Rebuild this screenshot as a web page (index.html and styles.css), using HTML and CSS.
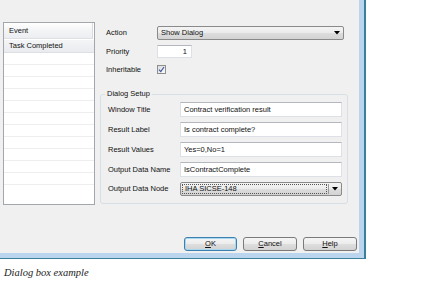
FILE: index.html
```html
<!DOCTYPE html>
<html>
<head>
<meta charset="utf-8">
<link rel="stylesheet" href="styles.css">
</head>
<body>
<div class="frame">
  <div class="window">
    <div class="main">
      <div class="list">
        <div class="list-head">Event</div>
        <div class="list-row selected">Task Completed</div>
        <div class="list-row"></div>
        <div class="list-row"></div>
        <div class="list-row"></div>
        <div class="list-row"></div>
        <div class="list-row"></div>
        <div class="list-row"></div>
        <div class="list-row"></div>
        <div class="list-row"></div>
        <div class="list-row"></div>
        <div class="list-row"></div>
        <div class="list-row"></div>
      </div>
      <div class="panel">
        <div class="top">
          <div class="row row-action">
            <span class="lbl">Action</span>
            <div class="combo combo-action">
              <span class="combo-text">Show Dialog</span>
              <svg class="arrow" width="6" height="4" viewBox="0 0 6 4"><path d="M0 0H6L3 3.5Z" fill="#000"/></svg>
            </div>
          </div>
          <div class="row row-priority">
            <span class="lbl">Priority</span>
            <div class="field field-num">1</div>
          </div>
          <div class="row row-check">
            <span class="lbl">Inheritable</span>
            <span class="check">
              <svg width="7" height="7" viewBox="0 0 7 7"><path d="M1 3.6L2.8 5.6L6 1" fill="none" stroke="#3d57a0" stroke-width="1.2"/></svg>
            </span>
          </div>
        </div>
        <div class="group">
          <div class="legend">Dialog Setup</div>
          <div class="grow">
            <span class="glbl">Window Title</span>
            <div class="field">Contract verification result</div>
          </div>
          <div class="grow">
            <span class="glbl">Result Label</span>
            <div class="field">Is contract complete?</div>
          </div>
          <div class="grow">
            <span class="glbl">Result Values</span>
            <div class="field">Yes=0,No=1</div>
          </div>
          <div class="grow">
            <span class="glbl">Output Data Name</span>
            <div class="field">IsContractComplete</div>
          </div>
          <div class="grow grow-last">
            <span class="glbl">Output Data Node</span>
            <div class="combo combo-node">
              <span class="focus">IHA SICSE-148</span>
              <span class="sep"></span>
              <svg class="arrow" width="6" height="4" viewBox="0 0 6 4"><path d="M0 0H6L3 3.5Z" fill="#000"/></svg>
            </div>
          </div>
        </div>
      </div>
    </div>
    <div class="buttons">
      <div class="btn btn-default"><span class="u">O</span>K</div>
      <div class="btn"><span class="u">C</span>ancel</div>
      <div class="btn"><span class="u">H</span>elp</div>
    </div>
  </div>
</div>
<p class="caption">Dialog box example</p>
</body>
</html>
```

FILE: styles.css
```css
html, body {
  margin: 0;
  padding: 0;
  background: #ffffff;
}

.frame {
  width: 364px;
  border-right: 2px solid #3a7f9c;
  border-bottom: 1px solid #3a7f9c;
}

.window {
  width: 359px;
  height: 253px;
  background: #f0f0f0;
  border-right: 5px solid #bcd5ee;
  border-bottom: 5px solid #bcd5ee;
  padding: 22px 0 0 3px;
  box-sizing: content-box;
  font-family: "Liberation Sans", Arial, sans-serif;
  font-size: 7.5px;
  line-height: 1;
  color: #111;
}

.window {
  width: 356px;
  height: 231px;
}

.main {
  display: flex;
  height: 183px;
}

.list {
  width: 92px;
  height: 183px;
  box-sizing: border-box;
  border: 1px solid #a3a6ab;
  background: #ffffff;
  overflow: hidden;
}

.list-head {
  height: 16px;
  box-sizing: border-box;
  display: flex;
  align-items: center;
  padding-left: 5px;
  background: linear-gradient(#ffffff, #f3f4f6 50%, #eceef1);
  border-bottom: 1px solid #dde0e4;
  border-right: 1px solid #d8dbe0;
  margin-right: 1px;
}

.list-row {
  height: 12px;
  box-sizing: border-box;
  display: flex;
  align-items: center;
  padding-left: 5px;
  border-bottom: 1px solid #eeeeee;
}

.list-row.selected {
  margin-top: 1px;
  height: 13px;
  background: linear-gradient(#f4f5f7, #e9ebee);
  border-bottom: 1px solid #dcdfe3;
}

.panel {
  margin-left: 5px;
  width: 248px;
  display: flex;
  flex-direction: column;
}

.top {
  padding-left: 6px;
  display: flex;
  flex-direction: column;
}

.row {
  display: flex;
  align-items: center;
}

.lbl {
  width: 51px;
  flex: none;
}

.row-action {
  margin-top: 4px;
  height: 14px;
}

.row-priority {
  margin-top: 5px;
  height: 13px;
}

.row-check {
  margin-top: 5px;
  height: 13px;
}

.combo {
  box-sizing: border-box;
  border: 1px solid #8a8a8a;
  border-radius: 2px;
  background: linear-gradient(#f4f4f4 0%, #ebebeb 48%, #dddddd 52%, #d3d3d3 100%);
  display: flex;
  align-items: center;
  position: relative;
}

.combo-action {
  width: 187px;
  height: 14px;
  padding-left: 3px;
}

.combo-text {
  flex: 1;
}

.arrow {
  flex: none;
  margin-right: 3px;
}

.field {
  box-sizing: border-box;
  width: 162px;
  height: 15px;
  background: #ffffff;
  border: 1px solid #dde0e6;
  border-top-color: #b4b7bd;
  display: flex;
  align-items: center;
  padding-left: 3px;
}

.field-num {
  width: 35px;
  height: 13px;
  justify-content: flex-end;
  padding-left: 0;
  padding-right: 4px;
}

.check {
  width: 9px;
  height: 9px;
  box-sizing: border-box;
  border: 1px solid #8e8f8f;
  background: linear-gradient(135deg, #dcdcdc, #fbfbfb);
  display: flex;
  align-items: center;
  justify-content: center;
}

.check svg {
  display: block;
}

.group {
  position: relative;
  margin-top: 18px;
  height: 110px;
  box-sizing: border-box;
  border: 1px solid #d5dfe5;
  border-radius: 3px;
  padding: 7px 0 0 7px;
  display: flex;
  flex-direction: column;
  gap: 5px;
}

.legend {
  position: absolute;
  left: 4px;
  top: -5px;
  padding: 0 2px;
  background: #f0f0f0;
}

.grow {
  display: flex;
  align-items: center;
  height: 15px;
}

.grow-last {
  height: 14px;
}

.glbl {
  width: 72px;
  flex: none;
}

.combo-node {
  width: 162px;
  height: 14px;
  padding: 1px;
}

.focus {
  flex: 1;
  height: 10px;
  box-sizing: border-box;
  border: 1px dotted #555;
  display: flex;
  align-items: center;
  padding-left: 2px;
  margin-right: 1px;
}

.sep {
  width: 1px;
  align-self: stretch;
  background: #9a9a9a;
  margin-right: 3px;
}

.combo-node .arrow {
  margin-right: 2px;
}

.buttons {
  margin-top: 32px;
  display: flex;
  justify-content: flex-end;
  padding-right: 2px;
  gap: 6px;
}

.btn {
  width: 54px;
  height: 14px;
  box-sizing: border-box;
  border: 1px solid #7a7a7a;
  border-radius: 3px;
  background: linear-gradient(#f5f5f5 0%, #ececec 48%, #dedede 52%, #d2d2d2 100%);
  display: flex;
  align-items: center;
  justify-content: center;
}

.btn-default {
  width: 53px;
  border-color: #3c7fb1;
  box-shadow: inset 0 0 0 1px #a8d8f0;
}

.u {
  text-decoration: underline;
}

.caption {
  margin: 8px 0 0 4px;
  font-family: "Liberation Serif", "Times New Roman", serif;
  font-style: italic;
  font-size: 10.5px;
  line-height: 12px;
  color: #222;
}
```
